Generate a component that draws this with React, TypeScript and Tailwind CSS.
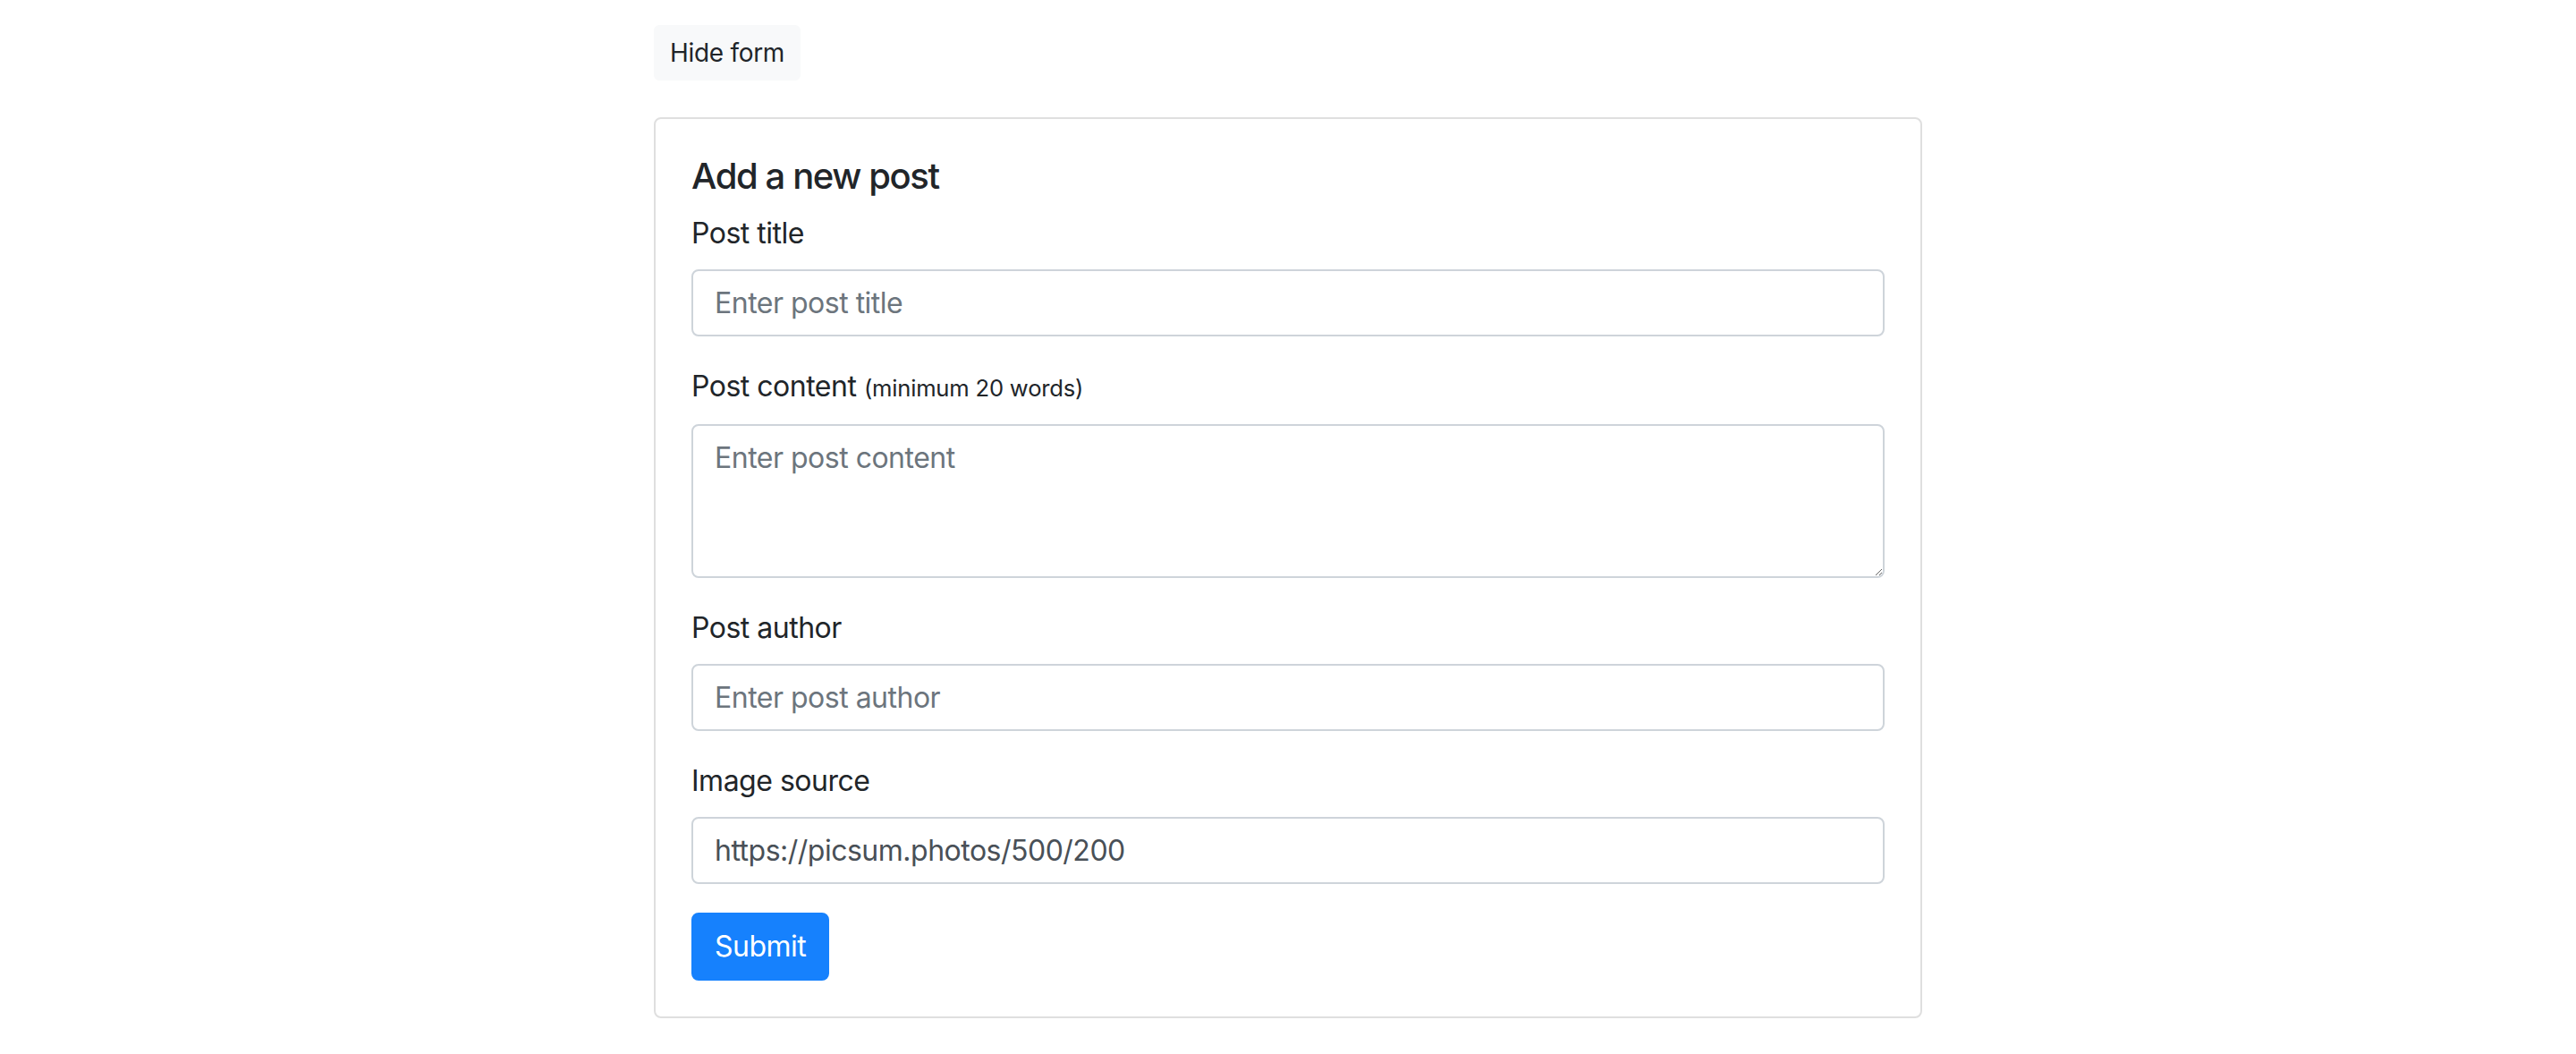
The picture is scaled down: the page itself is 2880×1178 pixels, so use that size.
import React from "react";

export default function App() {
  const font = { fontFamily: 'Inter, "Noto Sans", "Liberation Sans", sans-serif' };
  const inputCls =
    "block h-[75px] w-full rounded-[8px] border-2 border-[#ced4da] px-[24px] text-[32px] leading-[48px] tracking-[-0.5px] text-[#495057] outline-none placeholder:text-[#6c757d]";
  const labelCls = "mb-[16px] block text-[32px] leading-[48px] tracking-[-0.5px]";
  return (
    <div className="min-h-[1178px] w-full bg-white text-[#212529]" style={font}>
      <div className="mx-auto w-[1418px] pt-[28px]">
        <button
          type="button"
          className="mb-[41px] block h-[62px] rounded-[6px] border-2 border-[#f8f9fa] bg-[#f8f9fa] px-[16px] text-[28px] leading-[42px] tracking-[-0.3px] text-[#212529]"
        >
          Hide form
        </button>
        <div className="rounded-[8px] border-2 border-[#dfdfdf] bg-white p-[40px]">
          <h5 className="mb-[16px] text-[40px] font-medium leading-[48px] tracking-[-1.4px]">Add a new post</h5>
          <div className="mb-[32px]">
            <label className={labelCls}>Post title</label>
            <input type="text" placeholder="Enter post title" className={inputCls} />
          </div>
          <div className="mb-[32px]">
            <label className={labelCls}>
              Post content <span className="text-[25.6px] tracking-[-0.2px]">(minimum 20 words)</span>
            </label>
            <textarea
              rows={3}
              placeholder="Enter post content"
              className="block h-[172px] w-full rounded-[8px] border-2 border-[#ced4da] px-[24px] py-[12px] text-[32px] leading-[48px] tracking-[-0.5px] text-[#495057] outline-none placeholder:text-[#6c757d]"
            />
          </div>
          <div className="mb-[32px]">
            <label className={labelCls}>Post author</label>
            <input type="text" placeholder="Enter post author" className={inputCls} />
          </div>
          <div className="mb-[32px]">
            <label className={labelCls}>Image source</label>
            <input type="text" defaultValue="https://picsum.photos/500/200" className={inputCls} />
          </div>
          <button
            type="submit"
            className="block h-[76px] rounded-[8px] border-2 border-[#1681fd] bg-[#1681fd] px-[24px] text-[32px] leading-[48px] tracking-[-0.5px] text-white"
          >
            Submit
          </button>
        </div>
      </div>
    </div>
  );
}
